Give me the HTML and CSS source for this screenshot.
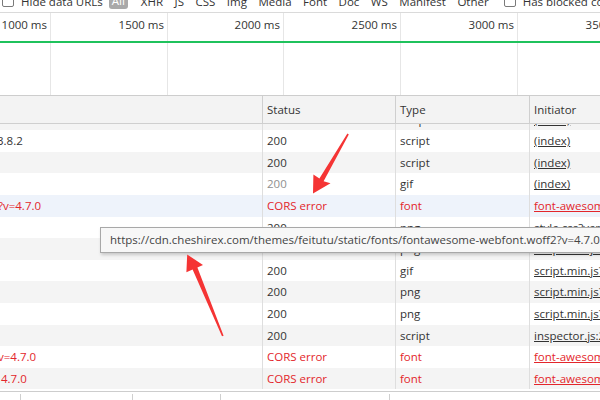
FILE: index.html
```html
<!DOCTYPE html>
<html lang="en">
<head>
<meta charset="utf-8">
<title>Network</title>
<link rel="stylesheet" href="styles.css">
</head>
<body>
<div class="page">
  <div class="toolbar">
    <div class="tb-row">
      <span class="cb"></span>
      <span class="tb-label">Hide data URLs</span>
      <span class="pill">All</span>
      <span class="tb-sep"></span>
      <div class="filters">
        <span>XHR</span><span>JS</span><span>CSS</span><span>Img</span><span>Media</span><span>Font</span><span>Doc</span><span>WS</span><span>Manifest</span><span>Other</span>
      </div>
      <span class="cb cb-right"></span>
      <span class="tb-label">Has blocked cookies</span>
    </div>
  </div>

  <div class="timeline">
    <div class="tl-col"><span>1000 ms</span></div>
    <div class="tl-col"><span>1500 ms</span></div>
    <div class="tl-col"><span>2000 ms</span></div>
    <div class="tl-col"><span>2500 ms</span></div>
    <div class="tl-col"><span>3000 ms</span></div>
    <div class="tl-col"><span>3500 ms</span></div>
    <div class="tl-marker"></div>
  </div>

  <div class="grid">
    <div class="row head">
      <div class="cell name"></div>
      <div class="cell">Status</div>
      <div class="cell">Type</div>
      <div class="cell">Initiator</div>
    </div>
    <div class="body">
      <div class="row alt partial">
        <div class="cell name"></div>
        <div class="cell">200</div>
        <div class="cell">script</div>
        <div class="cell"><span class="link">(index)</span></div>
      </div>
      <div class="row">
        <div class="cell name"><span class="n n1">3.8.2</span></div>
        <div class="cell">200</div>
        <div class="cell">script</div>
        <div class="cell"><span class="link">(index)</span></div>
      </div>
      <div class="row alt">
        <div class="cell name"></div>
        <div class="cell">200</div>
        <div class="cell">script</div>
        <div class="cell"><span class="link">(index)</span></div>
      </div>
      <div class="row">
        <div class="cell name"></div>
        <div class="cell muted">200</div>
        <div class="cell">gif</div>
        <div class="cell"><span class="link">(index)</span></div>
      </div>
      <div class="row sel err">
        <div class="cell name"><span class="n n4">?v=4.7.0</span></div>
        <div class="cell">CORS error</div>
        <div class="cell">font</div>
        <div class="cell"><span class="link">font-awesome.min.css</span></div>
      </div>
      <div class="row">
        <div class="cell name"></div>
        <div class="cell">200</div>
        <div class="cell">png</div>
        <div class="cell"><span class="link">style.css?ver=2.0</span></div>
      </div>
      <div class="row alt">
        <div class="cell name"></div>
        <div class="cell">200</div>
        <div class="cell">png</div>
        <div class="cell"><span class="link">script.min.js?ver=2.0</span></div>
      </div>
      <div class="row">
        <div class="cell name"></div>
        <div class="cell">200</div>
        <div class="cell">gif</div>
        <div class="cell"><span class="link">script.min.js?ver=2.0</span></div>
      </div>
      <div class="row alt">
        <div class="cell name"></div>
        <div class="cell">200</div>
        <div class="cell">png</div>
        <div class="cell"><span class="link">script.min.js?ver=2.0</span></div>
      </div>
      <div class="row">
        <div class="cell name"></div>
        <div class="cell">200</div>
        <div class="cell">png</div>
        <div class="cell"><span class="link">script.min.js?ver=2.0</span></div>
      </div>
      <div class="row alt">
        <div class="cell name"></div>
        <div class="cell">200</div>
        <div class="cell">script</div>
        <div class="cell"><span class="link">inspector.js:2</span></div>
      </div>
      <div class="row err">
        <div class="cell name"><span class="n n11">v=4.7.0</span></div>
        <div class="cell">CORS error</div>
        <div class="cell">font</div>
        <div class="cell"><span class="link">font-awesome.min.css</span></div>
      </div>
      <div class="row alt err">
        <div class="cell name"><span class="n n12">4.7.0</span></div>
        <div class="cell">CORS error</div>
        <div class="cell">font</div>
        <div class="cell"><span class="link">font-awesome.min.css</span></div>
      </div>
    </div>
  </div>

  <div class="statusbar">
    <span class="sb-item w1"></span>
    <span class="sb-item w2"></span>
    <span class="sb-item w3"></span>
    <span class="sb-item w4"></span>
  </div>

  <div class="tooltip">https://cdn.cheshirex.com/themes/feitutu/static/fonts/fontawesome-webfont.woff2?v=4.7.0</div>

  <svg class="arrows" width="600" height="400" viewBox="0 0 600 400">
    <polygon points="347.4,133.6 348.8,134.5 323.6,181.2 330.5,183.2 313,193.5 313.4,174.5 319.4,178.6"/>
    <polygon points="222,336.2 223.6,335.8 197.4,267.6 203,265 187.2,254.6 186.4,272.2 192.6,269.4"/>
  </svg>
</div>
</body>
</html>
```

FILE: styles.css
```css
* { box-sizing: border-box; }

html, body {
  margin: 0;
  padding: 0;
}

body {
  width: 600px;
  height: 400px;
  overflow: hidden;
  background: #fff;
  color: #333;
  font-family: "Open Sans", "Noto Sans", sans-serif;
  font-size: 11.5px;
}

.page {
  position: relative;
  width: 600px;
  height: 400px;
  display: flex;
  flex-direction: column;
  overflow: hidden;
}

/* toolbar (scrolled partly out of view) */
.toolbar {
  height: 13px;
  flex: none;
  border-bottom: 1px solid #dadada;
  overflow: hidden;
}

.tb-row {
  display: flex;
  align-items: center;
  height: 16px;
  line-height: 16px;
  margin-top: -6px;
  white-space: nowrap;
}

.cb {
  flex: none;
  width: 12px;
  height: 12px;
  margin-left: 2px;
  margin-bottom: 2px;
  border: 1px solid #7a7a7a;
  border-radius: 2px;
  background: #fff;
}

.tb-label { margin-left: 7px; }

.pill {
  margin-left: 6px;
  padding: 0 3px;
  height: 16px;
  margin-top: -2px;
  background: #a9a9a9;
  color: #fff;
  border-radius: 3px;
}

.tb-sep {
  width: 1px;
  height: 12px;
  margin-left: 6px;
  margin-bottom: 4px;
  background: #cfcfcf;
}

.filters {
  display: flex;
  gap: 11.5px;
  margin-left: 7px;
}

.cb-right { margin-left: 15px; }

/* timeline overview */
.timeline {
  position: relative;
  flex: none;
  height: 82px;
  display: grid;
  grid-template-columns: 51px 117px 116px 117px 117px 117px;
}

.tl-col {
  border-right: 1px solid #e6e6e6;
  text-align: right;
  padding: 4px 3px 0 0;
  line-height: 16px;
  white-space: nowrap;
}

.tl-marker {
  position: absolute;
  left: 0;
  right: 0;
  top: 28px;
  height: 2px;
  background: #1fc25c;
}

/* request table */
.grid {
  flex: 1;
  display: flex;
  flex-direction: column;
  min-height: 0;
  border-top: 1px solid #cdcdcd;
}

.row {
  display: grid;
  grid-template-columns: 262px 133px 134px 1fr;
  height: 21.6px;
  line-height: 21.6px;
  white-space: nowrap;
  background: #fff;
}

.row.alt { background: #f4f4f4; }
.row.sel { background: #eef3fb; }

.cell {
  padding-left: 4px;
  border-left: 1px solid #dedede;
  overflow: hidden;
}

.cell.name {
  border-left: none;
  padding-left: 0;
}

.head {
  height: 28px;
  line-height: 28px;
  background: #f3f3f3;
  border-bottom: 1px solid #cfcfcf;
  flex: none;
}

.head .cell { border-left-color: #cfcfcf; }

.body {
  flex: 1;
  min-height: 0;
  overflow: hidden;
}

.partial { margin-top: -15.3px; }

.muted { color: #8f8f8f; }

.err { color: #e3262b; }

.link { text-decoration: underline; }

.n { display: inline-block; }
.n1 { margin-left: -3px; }
.n4 { margin-left: -2px; }
.n11 { margin-left: -2px; }
.n12 { margin-left: 1px; }

/* status bar */
.statusbar {
  flex: none;
  height: 9px;
  border-top: 1px solid #cdcdcd;
  display: flex;
  padding-top: 2px;
}

.sb-item { border-right: 1px solid #cfcfcf; }
.w1 { width: 21px; }
.w2 { width: 112px; }
.w3 { width: 88px; }
.w4 { width: 169px; }

/* tooltip overlay */
.tooltip {
  position: absolute;
  left: 100px;
  top: 227px;
  height: 26px;
  line-height: 24px;
  padding: 0 40px 0 9px;
  white-space: nowrap;
  color: #444;
  background: #f7f7f7;
  border: 1px solid #a8a8a8;
  box-shadow: 1px 2px 3px rgba(0, 0, 0, 0.18);
}

/* annotation arrows */
.arrows {
  position: absolute;
  left: 0;
  top: 0;
  pointer-events: none;
}

.arrows polygon { fill: #f53434; }
```
